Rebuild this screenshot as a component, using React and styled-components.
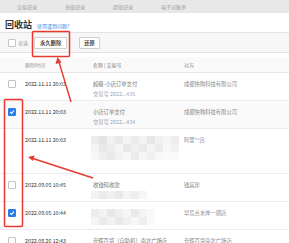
import React from 'react'
import styled, { createGlobalStyle } from 'styled-components'

const GlobalStyle = createGlobalStyle`
  html, body {
    margin: 0;
    padding: 0;
    background: #ffffff;
  }
  body {
    font-family: "Noto Sans CJK SC", "Noto Sans", sans-serif;
    color: #333333;
  }
`

const tabs = ['交易记录', '充值记录', '提现记录', '电子对账单']

const rows = [
  {
    id: 1,
    time: '2022.11.11 20:03',
    name: '超级-小店订单支付',
    trade: '交易号 2022...435',
    party: '成都快购科技有限公司',
    checked: false,
    height: 28
  },
  {
    id: 2,
    time: '2022.11.11 20:03',
    name: '小店订单支付',
    trade: '交易号 2022...434',
    party: '成都快购科技有限公司',
    checked: true,
    height: 28
  },
  {
    id: 3,
    time: '2022.11.11 20:03',
    mosaic: 'big',
    party: '阿里**店',
    noCheck: true,
    height: 45
  },
  {
    id: 4,
    time: '2022.09.05 10:45',
    name: '收钱码收款',
    mosaic: 'line',
    party: '钱其珍',
    checked: false,
    height: 28
  },
  {
    id: 5,
    time: '2022.09.05 10:44',
    mosaic: 'small',
    party: '早荒点水岸一期店',
    checked: true,
    height: 28
  },
  {
    id: 6,
    time: '2022.08.26 12:43',
    name: '壹辉百货（自助机）南北广场店',
    party: '壹辉百货南北广场店',
    checked: false,
    height: 28
  }
]

const mosaicShades = {
  big: [
    ['#ececec', '#e4e4e4', '#f1f1f1', '#e9e9e9', '#f4f4f4', '#ebebeb', '#f2f2f2', '#e6e6e6', '#f0f0f0', '#f6f6f6', '#ededed'],
    ['#f3f3f3', '#e8e8e8', '#eeeeee', '#f5f5f5', '#e7e7e7', '#f0f0f0', '#eaeaea', '#f4f4f4', '#ececec', '#f7f7f7', '#f2f2f2'],
    ['#f6f6f6', '#efefef', '#e9e9e9', '#f2f2f2', '#f7f7f7', '#ebebeb', '#f5f5f5', '#efefef', '#f8f8f8', '#fafafa', '#fbfbfb']
  ],
  small: [
    ['#ededed', '#f3f3f3', '#e8e8e8', '#f0f0f0', '#f6f6f6', '#eaeaea', '#f4f4f4', '#f8f8f8'],
    ['#f5f5f5', '#ebebeb', '#f2f2f2', '#e9e9e9', '#f0f0f0', '#f7f7f7', '#eeeeee', '#fafafa']
  ],
  line: [
    ['#f3f3f3', '#ebebeb', '#f0f0f0', '#e9e9e9', '#f4f4f4', '#eeeeee', '#f6f6f6']
  ]
}

export default function App() {
  return (
    <Page>
      <GlobalStyle />
      <TabBar>
        {tabs.map(t => (
          <Tab key={t}>{t}</Tab>
        ))}
      </TabBar>

      <Heading>
        <Title>回收站</Title>
        <HelpLink>使用遇到问题?</HelpLink>
      </Heading>

      <Toolbar>
        <SelectAll>
          <Check />
          <span>全选</span>
        </SelectAll>
        <Button>永久删除</Button>
        <Button light>还原</Button>
      </Toolbar>

      <HeaderRow>
        <CheckCell />
        <TimeCell muted>删除时间</TimeCell>
        <NameCell>名称 | 交易号</NameCell>
        <PartyCell>对方</PartyCell>
      </HeaderRow>

      {rows.map(row => (
        <Row key={row.id} $h={row.height} $shaded={row.checked && row.id === 2}>
          <CheckCell>{!row.noCheck && <Check checked={row.checked} />}</CheckCell>
          <TimeCell>{row.time}</TimeCell>
          <NameCell>
            {row.name && <NameLine>{row.name}</NameLine>}
            {row.trade && <TradeLine>{row.trade}</TradeLine>}
            {row.mosaic && <Mosaic shades={mosaicShades[row.mosaic]} />}
          </NameCell>
          <PartyCell>{row.party}</PartyCell>
        </Row>
      ))}

      <Annotations width="289" height="243" viewBox="0 0 289 243">
        <rect x="32.5" y="31.5" width="37" height="25" fill="none" stroke="#e8382f" strokeWidth="1.5" rx="1" />
        <rect x="4.5" y="99.5" width="18" height="127" fill="none" stroke="#e8382f" strokeWidth="1.5" rx="1" />
        <line x1="71" y1="102" x2="59" y2="62" stroke="#e8382f" strokeWidth="1.4" />
        <polygon points="57.5,57 55.5,64 61.5,62.5" fill="#e8382f" />
        <line x1="93" y1="178" x2="33" y2="158.5" stroke="#e8382f" strokeWidth="1.4" />
        <polygon points="28,157 34.5,155.5 33,161" fill="#e8382f" />
      </Annotations>
    </Page>
  )
}

function Check({ checked }) {
  return (
    <Box $checked={checked}>
      {checked && (
        <svg width="6" height="6" viewBox="0 0 10 10">
          <path d="M2 5.2 L4.2 7.4 L8.2 2.8" fill="none" stroke="#fff" strokeWidth="1.8" />
        </svg>
      )}
    </Box>
  )
}

function Mosaic({ shades }) {
  return (
    <MosaicGrid $cols={shades[0].length}>
      {shades.flat().map((c, i) => (
        <MosaicCell key={i} style={{ background: c }} />
      ))}
    </MosaicGrid>
  )
}

const Page = styled.div`
  position: relative;
  width: 289px;
  height: 243px;
  overflow: hidden;
  background: #fff;
`

const TabBar = styled.div`
  display: flex;
  align-items: center;
  gap: 28px;
  height: 13px;
  padding-left: 17px;
  background: #e8e8e8;
`

const Tab = styled.div`
  font-size: 5px;
  line-height: 13px;
  color: #9a9a9a;
  white-space: nowrap;
`

const Heading = styled.div`
  display: flex;
  align-items: baseline;
  gap: 5px;
  height: 19px;
  padding: 0 5px;
  box-sizing: border-box;
  padding-top: 7px;
`

const Title = styled.div`
  font-size: 9px;
  line-height: 10px;
  font-weight: 700;
  color: #333;
`

const HelpLink = styled.a`
  font-size: 5px;
  color: #3f8fe0;
`

const Toolbar = styled.div`
  display: flex;
  align-items: center;
  height: 21px;
  padding-left: 8px;
  background: #f7f7f7;
  border-top: 1px solid #e2e2e2;
  border-bottom: 1px solid #e2e2e2;
  box-sizing: border-box;
`

const SelectAll = styled.label`
  display: flex;
  align-items: center;
  gap: 2px;
  font-size: 5px;
  color: #999;
  width: 26px;
`

const Button = styled.div`
  height: 10px;
  padding: 0 ${p => (p.light ? '4px' : '5px')};
  margin-right: ${p => (p.light ? '0' : '12px')};
  display: flex;
  align-items: center;
  font-size: 5.3px;
  font-weight: 700;
  color: #444;
  background: #fff;
  border: 1px solid #cfcfcf;
  border-radius: 1px;
`

const Box = styled.span`
  display: inline-flex;
  align-items: center;
  justify-content: center;
  width: 6px;
  height: 6px;
  border-radius: 1px;
  border: 1px solid ${p => (p.$checked ? '#2b7de9' : '#c4c4c4')};
  background: ${p => (p.$checked ? '#2b7de9' : '#fff')};
`

const HeaderRow = styled.div`
  display: flex;
  align-items: center;
  height: 15px;
  margin-top: 4px;
  padding-left: 8px;
  background: #fafafa;
  border-bottom: 1px solid #e6e6e6;
  font-size: 5px;
  color: #999;
`

const Row = styled.div`
  display: flex;
  align-items: flex-start;
  height: ${p => p.$h}px;
  padding: 6px 0 0 8px;
  box-sizing: border-box;
  border-bottom: 1px solid #ececec;
  background: ${p => (p.$shaded ? '#fafafa' : '#fff')};
  font-size: 5.3px;
  line-height: 10px;
`

const CheckCell = styled.div`
  width: 17px;
  display: flex;
  align-items: center;
  height: 10px;
`

const TimeCell = styled.div`
  width: 68px;
  white-space: nowrap;
  color: ${p => (p.muted ? '#999' : '#333')};
`

const NameCell = styled.div`
  width: 91px;
  white-space: nowrap;
  color: #777;
`

const NameLine = styled.div`
  color: #777;
`

const TradeLine = styled.div`
  color: #9aa4b4;
`

const PartyCell = styled.div`
  flex: 1;
  white-space: nowrap;
  color: #888;
`

const MosaicGrid = styled.div`
  display: grid;
  grid-template-columns: repeat(${p => p.$cols}, 8px);
  grid-auto-rows: 8px;
  margin-top: 1px;
  margin-left: -2px;
`

const MosaicCell = styled.div``

const Annotations = styled.svg`
  position: absolute;
  top: 0;
  left: 0;
  pointer-events: none;
`
